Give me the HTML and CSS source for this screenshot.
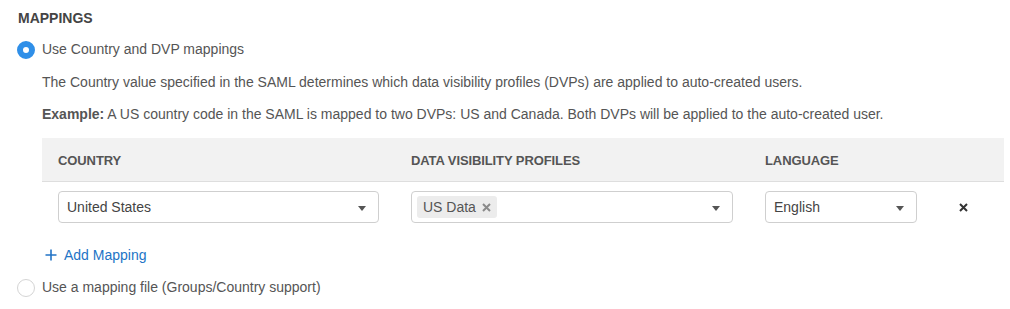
FILE: index.html
```html
<!DOCTYPE html>
<html>
<head>
<meta charset="utf-8">
<link rel="stylesheet" href="styles.css">
</head>
<body>
<div class="section">
  <h2 class="title">MAPPINGS</h2>
  <label class="radio-row">
    <span class="radio checked"></span>
    <span class="radio-label">Use Country and DVP mappings</span>
  </label>
  <div class="option-body">
    <p class="desc">The Country value specified in the SAML determines which data visibility profiles (DVPs) are applied to auto-created users.</p>
    <p class="desc example"><b>Example:</b> A US country code in the SAML is mapped to two DVPs: US and Canada. Both DVPs will be applied to the auto-created user.</p>
    <div class="table">
      <div class="thead">
        <div class="th">COUNTRY</div>
        <div class="th">DATA VISIBILITY PROFILES</div>
        <div class="th">LANGUAGE</div>
        <div class="th"></div>
      </div>
      <div class="trow">
        <div class="td">
          <div class="select"><span class="value">United States</span><span class="caret"></span></div>
        </div>
        <div class="td">
          <div class="select multi"><span class="tag">US Data <svg class="tag-x" width="9" height="9" viewBox="0 0 9 9"><path d="M1 1L8 8M8 1L1 8" stroke="currentColor" stroke-width="2" fill="none"/></svg></span><span class="caret"></span></div>
        </div>
        <div class="td">
          <div class="select"><span class="value">English</span><span class="caret"></span></div>
        </div>
        <div class="td remove-cell"><svg class="remove" width="9" height="9" viewBox="0 0 9 9"><path d="M1 1L8 8M8 1L1 8" stroke="currentColor" stroke-width="2" fill="none"/></svg></div>
      </div>
    </div>
    <a class="add-link" href="#"><svg class="plus" width="12" height="12" viewBox="0 0 12 12"><path d="M6 0.5V11.5M0.5 6H11.5" stroke="currentColor" stroke-width="1.6" fill="none"/></svg><span>Add Mapping</span></a>
  </div>
  <label class="radio-row second">
    <span class="radio"></span>
    <span class="radio-label">Use a mapping file (Groups/Country support)</span>
  </label>
</div>
</body>
</html>
```

FILE: styles.css
```css
* { box-sizing: border-box; }
html, body { margin: 0; padding: 0; background: #fff; }
body {
  font-family: "Liberation Sans", Arial, Helvetica, sans-serif;
  font-size: 14px;
  color: #555;
}
.section {
  padding: 10px 6px 0 17px;
  width: 1010px;
}
.title {
  margin: 0 0 13px 1px;
  font-size: 14px;
  line-height: 16px;
  font-weight: bold;
  color: #444;
}
.radio-row {
  display: flex;
  align-items: center;
  height: 20px;
  gap: 7px;
}
.radio-row.second { margin-top: 12px; }
.radio {
  width: 18px;
  height: 18px;
  border-radius: 50%;
  border: 1px solid #d4d4d4;
  background: #fff;
  margin-top: 1px;
  flex: none;
}
.radio.checked {
  border: 6px solid #2f8fe8;
}
.radio-label {
  line-height: 20px;
  color: #555;
}
.option-body {
  padding-left: 25px;
}
.desc {
  margin: 13px 0 0 0;
  line-height: 20px;
}
.desc.example { margin-top: 12px; }
.desc b { color: #555; }
.table {
  margin-top: 14px;
}
.thead, .trow {
  display: grid;
  grid-template-columns: 353px 354px 184px 71px;
}
.thead {
  background: #f2f2f2;
  height: 44px;
  border-bottom: 1px solid #dedede;
  align-items: center;
}
.th {
  padding: 0 16px;
  font-size: 13px;
  font-weight: bold;
  letter-spacing: -0.1px;
  color: #555;
  padding-top: 1px;
}
.trow {
  padding: 9px 0 10px;
  align-items: center;
}
.td {
  padding: 0 16px;
}
.select {
  height: 32px;
  border: 1px solid #cfcfcf;
  border-radius: 4px;
  display: flex;
  align-items: center;
  padding: 0 12px 0 8px;
  color: #444;
}
.select.multi { padding-left: 5px; }
.value { flex: 1; line-height: 20px; }
.caret {
  margin-left: auto;
  width: 0;
  height: 0;
  border-left: 4.5px solid transparent;
  border-right: 4.5px solid transparent;
  border-top: 5px solid #555;
  margin-top: 2px;
}
.tag {
  display: inline-flex;
  align-items: center;
  height: 22px;
  padding: 0 6px;
  background: #ececec;
  border-radius: 3px;
  color: #555;
  line-height: 20px;
}
.tag-x {
  margin-left: 6px;
  color: #8a8a8a;
}
.remove-cell {
  padding-left: 26px;
  display: flex;
  align-items: center;
}
.remove {
  color: #333;
}
.add-link {
  display: flex;
  align-items: center;
  gap: 7px;
  margin: 12px 0 0 3px;
  height: 20px;
  color: #2274c6;
  text-decoration: none;
  line-height: 20px;
}
.plus { flex: none; }
```
